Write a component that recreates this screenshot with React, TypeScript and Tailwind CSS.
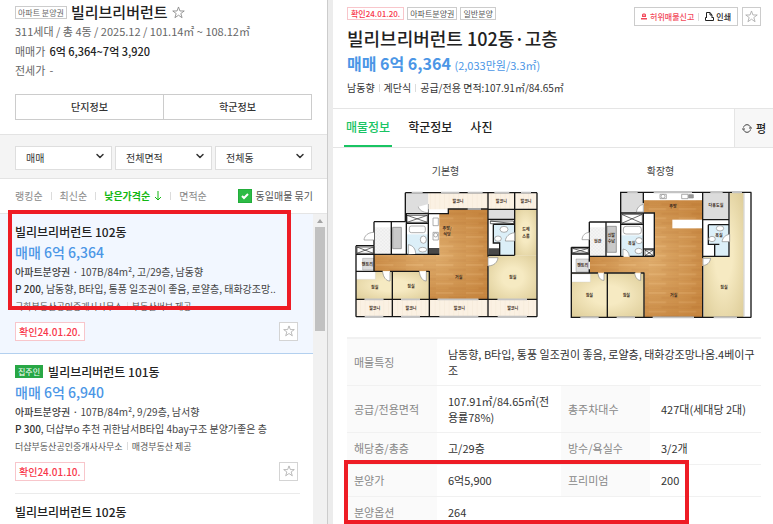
import { ReactNode } from "react";
import { ChevronDown } from "lucide-react";

type Listing = {
  id: number;
  name: string;
  owner?: boolean;
  active?: boolean;
  info?: {
    price: string;
    spec: string;
    premium: string;
    note: string;
    agent: string;
    source: string;
    confirmed: string;
  };
};

const listings: Listing[] = [
  {
    id: 1,
    name: "빌리브리버런트 102동",
    active: true,
    info: {
      price: "매매 6억 6,364",
      spec: "107B/84m², 고/29층, 남동향",
      premium: "200",
      note: "남동향, B타입, 통풍 일조권이 좋음, 로얄층, 태화강조망..",
      agent: "국화부동산공인중개사사무소",
      source: "부동산써브 제공",
      confirmed: "확인24.01.20.",
    },
  },
  {
    id: 2,
    name: "빌리브리버런트 101동",
    owner: true,
    info: {
      price: "매매 6억 6,940",
      spec: "107B/84m², 9/29층, 남서향",
      premium: "300",
      note: "더샵부o 추천 귀한남서B타입 4bay구조 분양가좋은 층",
      agent: "더샵부동산공인중개사사무소",
      source: "매경부동산 제공",
      confirmed: "확인24.01.10.",
    },
  },
  { id: 3, name: "빌리브리버런트 102동" },
];

function StarIcon({ className }: { className: string }) {
  return (
    <svg viewBox="0 0 24 24" fill="none" stroke="currentColor" strokeWidth="1.6" className={className} aria-hidden="true">
      <path d="M12 1.8 14.7 9.2H22.6L16.3 13.9 18.6 21.6 12 17 5.4 21.6 7.7 13.9 1.4 9.2H9.3Z" />
    </svg>
  );
}

function Bar({ className = "mx-1" }: { className?: string }) {
  return <span className={`inline-block h-2 w-px bg-[#dcdcdc] ${className}`} />;
}

function Select({ label, options }: { label: string; options: string[] }) {
  return (
    <div className="relative flex-1">
      <select
        aria-label={label}
        className="h-6 w-full appearance-none border border-[#dedede] bg-white pl-[10px] text-[10px] text-[#333]"
      >
        {options.map((option) => (
          <option key={option}>{option}</option>
        ))}
      </select>
      <ChevronDown className="pointer-events-none absolute top-[7px] right-[6px] h-3 w-3 text-[#333]" strokeWidth={3} />
    </div>
  );
}

function ListingItem({ item }: { item: Listing }) {
  const { info } = item;

  return (
    <li className={item.active ? "border-b border-[#b3d0ef] bg-[#f2f7ff] pl-[15px]" : "pl-[15px]"}>
      <div className={item.active ? "pt-2 pr-[15px] pb-3" : "mr-[13px] border-b border-[#ebebeb] pt-2 pr-[2px] pb-3"}>
        <h3 className="flex items-center text-[12px] leading-5 font-medium text-[#222]">
          {item.owner && (
            <span className="mr-[5px] bg-[#28a745] px-[3px] text-[8px] leading-[13px] font-normal text-white">집주인</span>
          )}
          {item.name}
        </h3>
        {info && (
          <>
            <p className="text-[14px] leading-[21px] font-medium text-[#4b96e6]">{info.price}</p>
            <p className="text-[10px] leading-[17px] text-[#444]">
              <span className="font-medium">아파트분양권 · </span>
              {info.spec}
            </p>
            <p className="text-[10px] leading-[17px] text-[#444]">
              <b className="font-medium text-[#333]">P {info.premium}</b>, {info.note}
            </p>
            <p className="text-[9px] leading-[19px] text-[#555]">
              {info.agent}
              <Bar />
              {info.source}
            </p>
            <div className="mt-[6px] flex justify-between">
              <span className="border border-[#f8c6cb] bg-white px-[3px] text-[10px] leading-[17px] font-medium text-[#f8374a]">
                {info.confirmed}
              </span>
              <button type="button" aria-label="관심매물" className="flex h-[19px] w-[19px] items-center justify-center border border-[#d4d4d4] bg-white text-[#aaa]">
                <StarIcon className="h-3 w-3" />
              </button>
            </div>
          </>
        )}
      </div>
    </li>
  );
}

function PlanDefs({ id }: { id: string }) {
  return (
    <defs>
      <pattern id={`${id}-wood`} width="90" height="28" patternUnits="userSpaceOnUse">
        <rect width="90" height="28" fill="#d6984f" />
        <rect width="52" height="7" fill="#dfa55f" />
        <rect x="38" y="14" width="52" height="7" fill="#d09048" />
        <path d="M0 7H90M0 14H90M0 21H90M0 28H90" stroke="#cb8b45" strokeWidth="1" />
      </pattern>
      <radialGradient id={`${id}-glow`} r=".6">
        <stop offset="0" stopColor="#fff0ca" stopOpacity=".25" />
        <stop offset="1" stopColor="#9c5517" stopOpacity=".25" />
      </radialGradient>
      <radialGradient id={`${id}-room`} r=".72">
        <stop offset=".3" stopColor="#f6eac2" />
        <stop offset="1" stopColor="#dccb96" />
      </radialGradient>
      <pattern id={`${id}-deck`} width="14" height="14" patternUnits="userSpaceOnUse">
        <rect width="14" height="14" fill="#fbf1e3" />
        <path d="M0 0V14" stroke="#f3e3d0" strokeWidth="2" />
      </pattern>
      <pattern id={`${id}-tile`} width="10" height="10" patternUnits="userSpaceOnUse">
        <rect width="10" height="10" fill="#f5f5f5" />
        <path d="M0 0 10 10M10 0 0 10" stroke="#dedede" strokeWidth="1" />
      </pattern>
    </defs>
  );
}

function BasicPlan() {
  return (
    <svg viewBox="0 30 600 390" className="w-[200px]" role="img" aria-label="기본형 평면도">
      <PlanDefs id="basic" />
      <path d="M178 37H573V409H30V197H84V125H178Z" fill="#fff" />
      <path d="M178 37H247V101H178Z" fill="#dedede" />
      <path d="M247 37H573V88H247ZM30 358H573V409H30Z" fill="url(#basic-deck)" />
      <path d="M84 142H136V223H84Z" fill="url(#basic-tile)" />
      <path d="M140 142H166V206H140Z" fill="#c9c9c9" stroke="#777" strokeWidth="2" />
      <path d="M183 163H246V222H183Z" fill="#dceff8" />
      <path d="M307 88H426V358H250V273H84V225H280V101H307Z" fill="url(#basic-wood)" />
      <path d="M307 88H426V358H250V273H84V225H280V101H307Z" fill="url(#basic-glow)" />
      <path d="M428 88H506V118H428Z" fill="#dedede" />
      <path d="M506 88H572V226H506Z" fill="url(#basic-room)" />
      <path d="M428 226H572V358H428Z" fill="url(#basic-room)" />
      <path d="M30 275H138V358H30ZM140 275H250V358H140Z" fill="url(#basic-room)" />
      <path d="M30 275H88V298H30Z" fill="#fff" stroke="#ccc" />
      <path d="M442 133H506V224H461V189H442Z" fill="#dceff8" />
      <path d="M247 204H280V223H247ZM428 205H461V225H428Z" fill="#484848" />
      <path d="M50 235H84V270H50Z" fill="#ddd" stroke="#777" />

      <g fill="none" stroke="#171717" strokeWidth="4">
        <path d="M178 38H573M178 38V125M84 125H178M84 125V197M30 197V410M30 410H573M573 38V410" />
        <path d="M30 197H84M30 223H280M84 197V275M136 125V223M181 101V223M178 101H247M181 130H247M247 88V223" />
        <path d="M247 101H307V87H426M426 38V230M426 258V410M426 88H573M506 38V226M426 226H506" />
        <path d="M250 273V410M30 274H110M132 274H220M240 274H250M139 275V410M426 118H506" />
        <path d="M442 133H506M442 133V189H461V225" />
        <path d="M30 358H56M112 358H165M222 358H275M397 358H455M543 358H573" />
      </g>
      <g stroke="#c3c3c3" strokeWidth="5" fill="none">
        <path d="M56 358H112M165 358H222M275 358H397M455 358H543M56 410H112M165 410H222M280 410H397M455 410H543M285 38H340M365 38H410M445 38H490M525 38H555M365 87H405M197 38H230" />
      </g>
      <g stroke="#222" strokeWidth="2" fill="none">
        <path d="M183 106H244V127H183ZM183 106 244 127M244 106 183 127M33 201H82V220H33ZM33 201 82 220M82 201 33 220" />
        <path d="M433 123H503V131H433ZM433 123 503 131" />
      </g>
      <g stroke="#888" strokeWidth="2" fill="#fff">
        <rect x="190" y="138" width="48" height="20" rx="6" />
        <ellipse cx="232" cy="179" rx="9" ry="11" />
        <ellipse cx="230" cy="209" rx="12" ry="7" />
        <ellipse cx="474" cy="148" rx="12" ry="9" />
        <ellipse cx="456" cy="176" rx="10" ry="8" />
        <path d="M261 114H277V137H261ZM261 157H277V180H261Z" />
        <circle cx="269" cy="165" r="6" />
        <path d="M247 72V98C230 98 219 89 217 80M84 157C65 157 55 168 54 180H84M187 223V194C201 196 209 207 209 222M132 275V303C119 303 112 290 110 276M241 275V303C229 303 222 290 220 276M426 258V233H456C454 247 445 257 426 258M506 158V183H478C479 170 489 160 506 158" />
      </g>
      <g fill="#3b2b20" fontFamily='"Noto Sans CJK KR", sans-serif' fontSize="12" fontWeight="700" textAnchor="middle">
        <text x="336" y="68">발코니</text>
        <text x="466" y="69">발코니</text>
        <text x="540" y="69">발코니</text>
        <text x="303" y="149">주방/</text>
        <text x="303" y="168">식당</text>
        <text x="540" y="154">드레</text>
        <text x="540" y="173">스룸</text>
        <text x="64" y="258">팬트리</text>
        <text x="338" y="296">거실</text>
        <text x="500" y="298">침실</text>
        <text x="86" y="327">침실</text>
        <text x="195" y="323">침실</text>
        <text x="86" y="390">발코니</text>
        <text x="195" y="390">발코니</text>
        <text x="340" y="390">발코니</text>
        <text x="500" y="390">발코니</text>
      </g>
    </svg>
  );
}

function ExtendedPlan() {
  return (
    <svg viewBox="7 30 600 390" className="w-[200px]" role="img" aria-label="확장형 평면도">
      <PlanDefs id="ext" />
      <path d="M186 37H577V412H38V202H92V126H186Z" fill="#fff" />
      <path d="M186 37H254V99H186ZM434 37H511V118H434Z" fill="#dcdcdc" />
      <path d="M94 142H142V229H94Z" fill="url(#ext-tile)" />
      <path d="M145 139H173V217H145Z" fill="#c9c9c9" stroke="#777" strokeWidth="2" />
      <path d="M188 166H253V228H188Z" fill="#dceff8" />
      <path d="M256 61H432V411H257V278H94V230H287V98H256Z" fill="url(#ext-wood)" />
      <path d="M256 61H432V411H257V278H94V230H287V98H256Z" fill="url(#ext-glow)" />
      <path d="M341 119H432V145H341Z" fill="#fff" />
      <path d="M514 39H555V411H435V231H514Z" fill="url(#ext-room)" />
      <path d="M38 280H145V411H38ZM148 280H256V411H148Z" fill="url(#ext-room)" />
      <path d="M38 282H95V306H38Z" fill="#fff" stroke="#ccc" />
      <path d="M449 134H511V228H468V193H449Z" fill="#dceff8" />
      <path d="M52 237H91V275H52Z" fill="#ddd" stroke="#777" />

      <g fill="none" stroke="#171717" strokeWidth="4">
        <path d="M184 37H578M186 37V230M92 126H186M92 126V245M38 202V412M36 412H578M577 37V412" />
        <path d="M38 202H92M38 222H92M92 229H195M213 229H287M142 126V229M186 99H287V229M186 133H254M254 37V70M254 98V229" />
        <path d="M432 37V235M432 258V412M432 119H511V229H432M511 37V119" />
        <path d="M38 279H118M136 279H230M246 279H257M146 280V412M256 278V412M92 268V279" />
        <path d="M449 134H511M449 134V193H482M468 193V229" />
        <path d="M256 207H287" />
      </g>
      <path d="M556 39V410" stroke="#ccc" strokeWidth="3" />
      <path d="M65 412H120M174 412H229M282 412H406M465 412H535M206 37H237M285 37H400M455 37H492M520 37H550" stroke="#c3c3c3" strokeWidth="5" />
      <g stroke="#222" strokeWidth="2" fill="none">
        <path d="M189 103H251V130H189ZM189 103 251 130M251 103 189 130M41 205H89V219H41ZM41 205 89 219M89 205 41 219M259 210H284V227H259ZM259 210 284 227M284 210 259 227" />
      </g>
      <g stroke="#888" strokeWidth="2" fill="#fff">
        <rect x="194" y="139" width="54" height="23" rx="8" />
        <ellipse cx="241" cy="182" rx="10" ry="9" />
        <ellipse cx="240" cy="213" rx="11" ry="8" />
        <ellipse cx="484" cy="145" rx="11" ry="8" />
        <ellipse cx="460" cy="177" rx="10" ry="8" />
        <path d="M304 43H323V56H304ZM369 43H388V56H369Z" />
        <circle cx="313" cy="49" r="6" />
        <path d="M390 44H404V54H390Z" fill="#999" />
        <path d="M254 73V96H233C235 83 243 75 254 73M92 157V179H70C71 165 80 158 92 157M193 229V207C205 209 211 217 212 229M136 280V301C124 301 119 291 118 280M246 280V301C235 301 230 291 228 280M433 256V235H456C453 249 445 256 433 256M513 163V185H490C492 173 501 164 513 163" />
      </g>
      <g fill="#3b2b20" fontFamily='"Noto Sans CJK KR", sans-serif' fontSize="12" fontWeight="700" textAnchor="middle">
        <text x="343" y="83">주방</text>
        <text x="472" y="82">다용도실</text>
        <text x="117" y="188">현관</text>
        <text x="158" y="171">신발</text>
        <text x="158" y="190">수납</text>
        <text x="219" y="196">욕실</text>
        <text x="481" y="170">욕실</text>
        <text x="72" y="262">팬트리</text>
        <text x="92" y="350">침실</text>
        <text x="203" y="350">침실</text>
        <text x="345" y="350">거실</text>
        <text x="496" y="327">침실</text>
      </g>
    </svg>
  );
}

function Th({ children }: { children: ReactNode }) {
  return <th scope="row" className="bg-[#fafafa] px-[7px] text-left font-normal text-[#888]">{children}</th>;
}

function Td({ children, span }: { children: ReactNode; span?: number }) {
  return <td colSpan={span} className="pr-1 pl-[11px] break-all text-[#333]">{children}</td>;
}

function Complex() {
  return (
    <aside className="relative flex w-[328px] shrink-0 flex-col border-r border-[#ccc] bg-white">
      <header className="px-[15px] pb-[14px]">
        <div className="flex h-6 items-center">
          <span className="border border-[#ccc] px-[2px] text-[8px] leading-[11px] text-[#666]">아파트 분양권</span>
          <h1 className="ml-1 text-[15px] leading-6 font-medium text-[#222]">빌리브리버런트</h1>
          <button type="button" aria-label="관심단지" className="ml-1 text-[#888]">
            <StarIcon className="h-[13px] w-[13px]" />
          </button>
        </div>
        <p className="text-[11px] leading-[14px] text-[#666]">311세대 / 총 4동 / 2025.12 / 101.14㎡ ~ 108.12㎡</p>
        <dl className="mt-1 text-[11px] leading-[19px] text-[#666]">
          <div className="flex gap-1">
            <dt>매매가</dt>
            <dd className="font-medium text-[#222]">6억 6,364~7억 3,920</dd>
          </div>
          <div className="flex gap-1">
            <dt>전세가</dt>
            <dd>-</dd>
          </div>
        </dl>
        <div className="mt-[14px] flex border border-[#ccc] text-[10px] leading-6 font-medium text-[#333]">
          <button type="button" className="flex-1 border-r border-[#ccc]">단지정보</button>
          <button type="button" className="flex-1">학군정보</button>
        </div>
      </header>

      <div className="flex gap-[3px] border-y border-[#e3e3e3] bg-[#f4f4f4] px-[15px] py-2">
        <Select label="거래유형" options={["매매", "전세", "월세"]} />
        <Select label="면적" options={["전체면적"]} />
        <Select label="동" options={["전체동", "101동", "102동"]} />
      </div>

      <div className="flex h-[35px] items-center border-b border-[#e5e5e5] pr-[14px] pl-[15px] text-[10px] whitespace-nowrap text-[#888]">
        <button type="button">랭킹순</button>
        <Bar className="mx-2" />
        <button type="button">최신순</button>
        <Bar className="mx-2" />
        <button type="button" className="flex items-center font-bold text-[#12b812]">
          낮은가격순
          <svg viewBox="0 0 8 10" className="ml-1 h-[10px] w-2" fill="none" stroke="currentColor" aria-hidden="true">
            <path d="M4 0V9M1 6 4 9 7 6" />
          </svg>
        </button>
        <Bar className="mx-2" />
        <button type="button">면적순</button>
        <label className="ml-auto flex items-center gap-1 text-[#555]">
          <span className="relative h-[14px] w-[14px]">
            <input type="checkbox" defaultChecked className="peer block h-[14px] w-[14px] appearance-none border border-[#ccc] checked:border-[#23ad3b] checked:bg-[#2dbb46]" />
            <svg viewBox="0 0 14 14" className="pointer-events-none absolute inset-0 hidden peer-checked:block" fill="none" stroke="#fff" strokeWidth="2" aria-hidden="true">
              <path d="M4 7 6 9 10 5" />
            </svg>
          </span>
          동일매물 묶기
        </label>
      </div>

      <div className="flex min-h-0 flex-1">
        <ul className="min-w-0 flex-1 overflow-hidden whitespace-nowrap">
          {listings.map((item) => (
            <ListingItem key={item.id} item={item} />
          ))}
        </ul>
        <div className="w-[14px] bg-[#f1f1f1] px-[2px]" aria-hidden="true">
          <svg viewBox="0 0 10 13" className="h-[13px] w-[10px]">
            <path d="M2 9H8L5 5Z" fill="#a3a3a3" />
          </svg>
          <div className="h-[104px] bg-[#c1c1c1]" />
        </div>
      </div>

      <div className="pointer-events-none absolute top-[210px] left-2 h-[100px] w-[283px] border-4 border-[#ee1c25]" />
    </aside>
  );
}

function Detail() {
  return (
    <main className="relative min-w-0 flex-1 bg-white">
      <header className="border-b border-[#e5e5e5] px-[14px] pt-[7px] pb-[11px]">
        <div className="flex items-start justify-between">
          <div className="flex gap-[3px] text-[8px] leading-[11px] text-[#555]">
            <span className="border border-[#f8c6cb] px-[3px] font-medium text-[#f8374a]">확인24.01.20.</span>
            <span className="border border-[#ccc] px-[2px]">아파트분양권</span>
            <span className="border border-[#ccc] px-[2px]">일반분양</span>
          </div>
          <div className="mr-[-2px] flex gap-1">
            <div className="flex h-[19px] items-center border border-[#ccc] px-[6px] text-[8px] font-medium">
              <button type="button" className="flex items-center gap-[3px] text-[#f2485a]">
                <svg viewBox="0 0 6 7" className="h-[7px] w-[6px]" fill="currentColor" aria-hidden="true">
                  <path d="M1 4V1.5L2 .5H4L5 1.5V4ZM0 5H6V6.5H0Z" />
                  <path d="M2.5 1.5H3.5V3H2.5Z" fill="#fff" />
                </svg>
                허위매물신고
              </button>
              <span className="mr-[6px] ml-1 h-2 w-px bg-[#ddd]" />
              <button type="button" className="flex items-center gap-[2px] text-[#222]">
                <svg viewBox="0 0 9 9" className="h-[9px] w-[9px]" fill="none" stroke="currentColor" aria-hidden="true">
                  <path d="M1.5 6V.5H5L7 3V6M5 .5V3H7M2 5.5H.5V8.5H8.5V5.5H7" />
                </svg>
                인쇄
              </button>
            </div>
            <button type="button" aria-label="관심매물" className="flex h-[19px] w-[19px] items-center justify-center border border-[#ccc] text-[#aaa]">
              <StarIcon className="h-[13px] w-[13px]" />
            </button>
          </div>
        </div>
        <h2 className="text-[18px] leading-[25px] font-medium text-[#222]">빌리브리버런트 102동·고층</h2>
        <p className="text-[16px] leading-[25px] font-bold text-[#4b96e6]">
          매매 6억 6,364 <span className="text-[11px] font-normal">(2,033만원/3.3㎡)</span>
        </p>
        <p className="text-[10px] leading-[19px] text-[#333]">
          남동향
          <Bar />
          계단식
          <Bar />
          공급/전용 면적:107.91㎡/84.65㎡
        </p>
      </header>

      <div className="flex h-[39px] border-b border-[#e5e5e5] pl-[11px] text-[12px] font-medium text-[#222]">
        <nav className="flex flex-1">
          <a href="#info" className="border-b-2 border-[#19c463] px-[2px] leading-9 text-[#19c463]">매물정보</a>
          <a href="#school" className="ml-[14px] px-[2px] leading-9">학군정보</a>
          <a href="#photos" className="ml-[14px] px-[2px] leading-9">사진</a>
        </nav>
        <button type="button" className="flex w-[39px] items-center justify-center gap-1 border-l border-[#e5e5e5] bg-[#f7f7f7] text-[11px]">
          <svg viewBox="0 0 10 9" className="h-[9px] w-[10px]" fill="none" stroke="#444" aria-hidden="true">
            <path d="M1.5 3.5C2 1.5 3.5 .7 5 .7S8 1.6 8.5 3.5M8.5 5.5C8 7.5 6.5 8.3 5 8.3S2 7.4 1.5 5.5M0 5H3M7 4H10" />
          </svg>
          평
        </button>
      </div>

      <section className="grid grid-cols-2 px-[5px] pt-[14px] text-center text-[10px] leading-[18px] text-[#444]">
        <figure className="flex flex-col items-center gap-[10px]">
          <figcaption>기본형</figcaption>
          <BasicPlan />
        </figure>
        <figure className="flex flex-col items-center gap-[10px]">
          <figcaption>확장형</figcaption>
          <ExtendedPlan />
        </figure>
      </section>

      <div className="mt-[17px] pr-3 pl-[14px]">
        <table className="w-full table-fixed border-t-2 border-[#f1f1f1] text-[11px] leading-4">
          <colgroup>
            <col className="w-[90px]" />
            <col />
            <col className="w-[89px]" />
            <col className="w-[111px]" />
          </colgroup>
          <tbody>
            <tr className="h-[47px] border-b border-[#f1f1f1]">
              <Th>매물특징</Th>
              <Td span={3}>남동향, B타입, 통풍 일조권이 좋음, 로얄층, 태화강조망나옴.4베이구조</Td>
            </tr>
            <tr className="h-[47px] border-b border-[#f1f1f1]">
              <Th>공급/전용면적</Th>
              <Td>107.91㎡/84.65㎡(전용률78%)</Td>
              <Th>총주차대수</Th>
              <Td>427대(세대당 2대)</Td>
            </tr>
            <tr className="h-8 border-b border-[#f1f1f1]">
              <Th>해당층/총층</Th>
              <Td>고/29층</Td>
              <Th>방수/욕실수</Th>
              <Td>3/2개</Td>
            </tr>
            <tr className="h-8 border-b border-[#f1f1f1]">
              <Th>분양가</Th>
              <Td>6억5,900</Td>
              <Th>프리미엄</Th>
              <Td>200</Td>
            </tr>
            <tr className="h-8">
              <Th>분양옵션</Th>
              <Td span={3}>264</Td>
            </tr>
          </tbody>
        </table>
      </div>

      <div className="pointer-events-none absolute top-[460px] left-[11px] h-16 w-[345px] border-4 border-[#ee1c25]" />
    </main>
  );
}

export default function App() {
  return (
    <div className="flex h-screen gap-[5px] overflow-hidden bg-[#ececec] font-['Noto_Sans_CJK_KR',sans-serif]">
      <Complex />
      <Detail />
    </div>
  );
}
